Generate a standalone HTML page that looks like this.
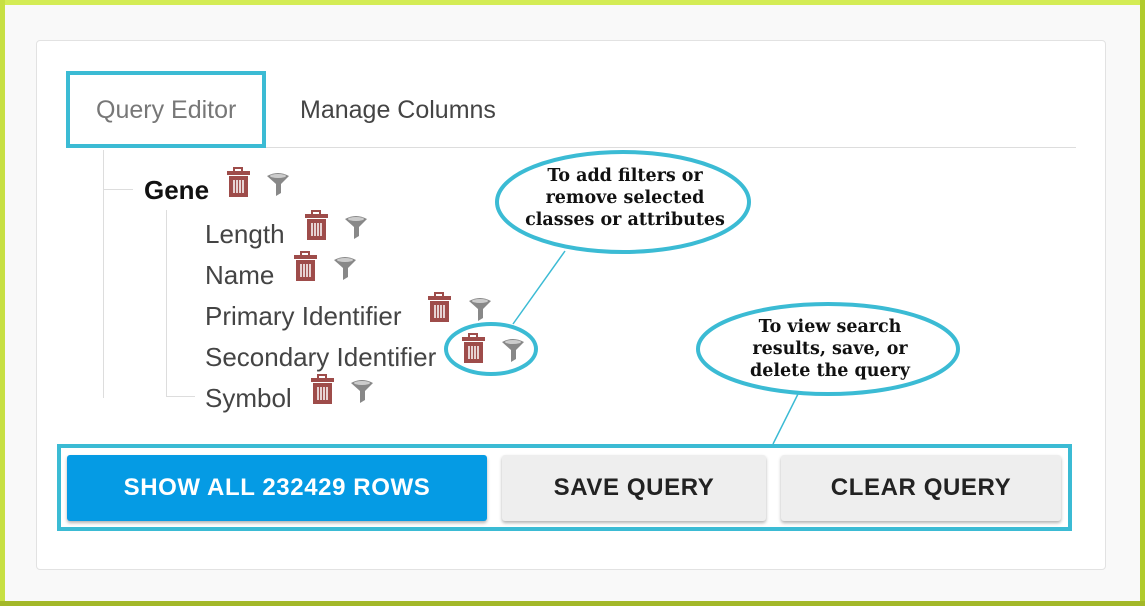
<!DOCTYPE html>
<html><head><meta charset="utf-8"><style>
*{margin:0;padding:0;box-sizing:border-box}
body{width:1145px;height:606px;position:relative;overflow:hidden;background:#f9f9f9;font-family:"Liberation Sans",sans-serif}
.a{position:absolute}
.card{left:36px;top:40px;width:1070px;height:530px;background:#fff;border:1px solid #e2e2e2;border-radius:4px}
.t{position:absolute;font-size:25px;white-space:nowrap;line-height:1}
.it{color:#444;font-size:26px}
.btn{position:absolute;top:455px;height:66px;border-radius:3px;font-weight:bold;font-size:24px;letter-spacing:.6px;display:flex;align-items:center;justify-content:center;box-shadow:0 2px 3px rgba(0,0,0,.3)}
.cap{position:absolute;font-family:"DejaVu Serif","Liberation Serif",serif;font-weight:bold;font-size:17.5px;line-height:22px;text-align:center;color:#111;white-space:nowrap}
</style></head><body>
<div class="a" style="left:0;top:0;width:1145px;height:5px;background:#d4ec55"></div>
<div class="a" style="left:0;top:0;width:5px;height:606px;background:#c7e043"></div>
<div class="a" style="right:0;top:0;width:5px;height:606px;background:#b0cb2c"></div>
<div class="a" style="left:0;bottom:0;width:1145px;height:5px;background:#a3b829"></div>
<div class="a card"></div>
<div class="a" style="left:265px;top:147px;width:811px;height:1px;background:#ddd"></div>
<div class="t" style="left:96px;top:98px;color:#777">Query Editor</div>
<div class="t" style="left:300px;top:98px;color:#444">Manage Columns</div>
<div class="a" style="left:66px;top:71px;width:200px;height:77px;border:4px solid #3bbbd4"></div>
<div class="a" style="left:103px;top:150px;width:1px;height:248px;background:#ddd"></div>
<div class="a" style="left:103px;top:189px;width:30px;height:1px;background:#ddd"></div>
<div class="a" style="left:166px;top:210px;width:1px;height:187px;background:#ddd"></div>
<div class="a" style="left:166px;top:396px;width:29px;height:1px;background:#ddd"></div>
<div class="t" style="left:144px;top:177px;font-weight:bold;font-size:26px;color:#111">Gene</div>
<div class="t it" style="left:205px;top:221px">Length</div>
<div class="t it" style="left:205px;top:262px">Name</div>
<div class="t it" style="left:205px;top:303px">Primary Identifier</div>
<div class="t it" style="left:205px;top:344px">Secondary Identifier</div>
<div class="t it" style="left:205px;top:385px">Symbol</div>
<svg class="a" style="left:0;top:0" width="1145" height="606">
<defs>
<g id="tr"><rect x="7" y="0" width="8" height="4" fill="none" stroke="#9e4c4a" stroke-width="2"/><rect x="0" y="3" width="23" height="4" fill="#9e4c4a"/><rect x="2" y="8" width="19" height="21" fill="#9e4c4a"/><g stroke="#fff" stroke-width="1.5"><line x1="7" y1="12" x2="7" y2="25"/><line x1="10" y1="12" x2="10" y2="25"/><line x1="13" y1="12" x2="13" y2="25"/><line x1="16" y1="12" x2="16" y2="25"/></g></g>
<g id="fu"><path d="M0 4 Q11 -2 22 4 L14 12 L14 21 L9 24 L9 12 Z" fill="#888"/><ellipse cx="11" cy="4" rx="8" ry="2" fill="#ccc"/></g>
</defs>
<use href="#tr" x="227" y="168"/><use href="#fu" x="267" y="172"/>
<use href="#tr" x="305" y="211"/><use href="#fu" x="345" y="215"/>
<use href="#tr" x="294" y="252"/><use href="#fu" x="334" y="256"/>
<use href="#tr" x="428" y="293"/><use href="#fu" x="469" y="297"/>
<use href="#tr" x="462" y="334"/><use href="#fu" x="502" y="338"/>
<use href="#tr" x="311" y="375"/><use href="#fu" x="351" y="379"/>
<g fill="none" stroke="#3bbbd4" stroke-width="4">
<ellipse cx="623" cy="202" rx="126" ry="50"/>
<ellipse cx="491" cy="349" rx="45" ry="25"/>
<ellipse cx="828" cy="349" rx="130" ry="45"/>
<rect x="59" y="446" width="1011" height="83"/>
</g>
<g stroke="#3bbbd4" stroke-width="1.5"><line x1="565" y1="251" x2="513" y2="324"/><line x1="798" y1="394" x2="773" y2="444"/></g>
</svg>
<div class="cap" style="left:490px;top:165px;width:270px">To add filters or<br>remove selected<br>classes or attributes</div>
<div class="cap" style="left:695px;top:316px;width:270px">To view search<br>results, save, or<br>delete the query</div>
<div class="btn" style="left:67px;width:420px;background:#059be4;color:#fff">SHOW ALL 232429 ROWS</div>
<div class="btn" style="left:502px;width:264px;background:#eee;color:#222">SAVE QUERY</div>
<div class="btn" style="left:781px;width:280px;background:#eee;color:#222">CLEAR QUERY</div>
</body></html>
